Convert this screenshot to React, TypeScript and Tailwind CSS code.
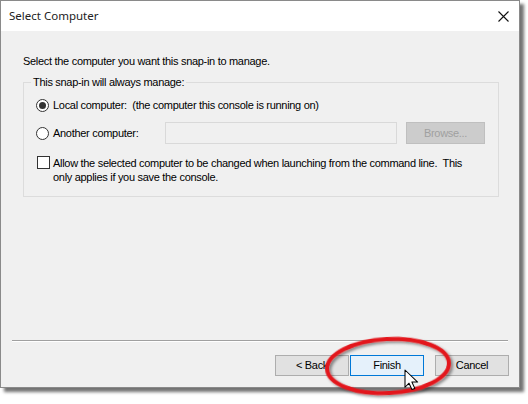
import React from "react";

const body = { fontFamily: '"Liberation Sans", Arial, sans-serif' };
const title = { fontFamily: '"Noto Sans", "Liberation Sans", sans-serif' };

function Radio({ checked }: { checked?: boolean }) {
  return (
    <span className="w-[13px] h-[13px] rounded-full border border-[#333] bg-white flex items-center justify-center shrink-0">
      {checked && <span className="w-[7px] h-[7px] rounded-full bg-[#333]" />}
    </span>
  );
}

export default function App() {
  return (
    <div className="w-[528px] h-[404px] bg-white relative overflow-hidden text-[11px] tracking-[-0.3px] text-black" style={body}>
      <div className="w-[520px] h-[388px] border border-[#8a8a8a] bg-[#f0f0f0] flex flex-col shadow-[4px_4px_3px_rgba(0,0,0,0.55)]">
        {/* title bar */}
        <div className="h-[30px] bg-white flex items-center justify-between pl-[8px] pr-[10px]">
          <span className="text-[11.5px] leading-[16px] tracking-normal text-[#222]" style={title}>Select Computer</span>
          <svg width="11" height="11" viewBox="0 0 11 11">
            <path d="M0.5 0.5 L10.5 10.5 M10.5 0.5 L0.5 10.5" stroke="#111" strokeWidth="1.1" />
          </svg>
        </div>
        {/* content */}
        <div className="flex-1 pl-[22px] pt-[22px]">
          <div className="leading-[16px] h-[16px]">Select the computer you want this snap-in to manage.</div>
          <div className="relative mt-[13px] w-[476px] h-[115px] border border-[#dcdcdc]">
            <span className="absolute left-[7px] top-[-9px] px-[2px] bg-[#f0f0f0] leading-[16px]">
              This snap-in will always manage:
            </span>
            <div className="flex items-center gap-[4px] pl-[12px] mt-[14px] h-[16px]">
              <Radio checked />
              <span className="leading-[16px]">Local computer:&nbsp; (the computer this console is running on)</span>
            </div>
            <div className="flex items-center pl-[12px] mt-[9px] h-[22px]">
              <Radio />
              <span className="ml-[4px] w-[112px] leading-[16px]">Another computer:</span>
              <div className="w-[232px] h-[22px] border border-[#d9d9d9] bg-[#f0f0f0]" />
              <div className="ml-[9px] w-[79px] h-[22px] border border-[#bfbfbf] bg-[#cccccc] text-[#a0a0a0] flex items-center justify-center">
                Browse...
              </div>
            </div>
            <div className="flex items-start pl-[13px] mt-[12px]">
              <span className="w-[13px] h-[13px] border border-[#333] bg-white shrink-0" />
              <span className="ml-[3px] leading-[14px] w-[420px]">
                Allow the selected computer to be changed when launching from the command line.&nbsp; This only applies if you save the console.
              </span>
            </div>
          </div>
        </div>
        {/* separator */}
        <div className="mx-[11px] h-[2px] border-t border-[#a0a0a0] border-b border-b-white" />
        {/* buttons */}
        <div className="flex justify-end pr-[10px] pt-[13px] pb-[11px]">
          <div className="w-[74px] h-[21px] border border-[#adadad] bg-[#e1e1e1] flex items-center justify-center">&lt; Back</div>
          <div className="ml-[1px] w-[74px] h-[21px] border border-[#0078d7] bg-[#e5f1fb] flex items-center justify-center">Finish</div>
          <div className="ml-[11px] w-[74px] h-[21px] border border-[#adadad] bg-[#e1e1e1] flex items-center justify-center">Cancel</div>
        </div>
      </div>

      {/* red ellipse annotation and cursor */}
      <svg className="absolute left-0 top-0 pointer-events-none" width="528" height="404" viewBox="0 0 528 404">
        <defs>
          <filter id="sh" x="-20%" y="-20%" width="140%" height="140%">
            <feDropShadow dx="2" dy="2" stdDeviation="1.5" floodColor="#000" floodOpacity="0.45" />
          </filter>
        </defs>
        <ellipse cx="388" cy="366" rx="61" ry="27" fill="none" stroke="#e3161b" strokeWidth="4" transform="rotate(-3 388 366)" filter="url(#sh)" />
        <g transform="translate(405 370) scale(1.15)">
          <path d="M0 0 L0 15 L3.5 11.5 L6 17 L8.5 16 L6 10.5 L11 10.5 Z" fill="#fff" stroke="#000" strokeWidth="0.9" strokeLinejoin="round" />
        </g>
      </svg>
    </div>
  );
}
